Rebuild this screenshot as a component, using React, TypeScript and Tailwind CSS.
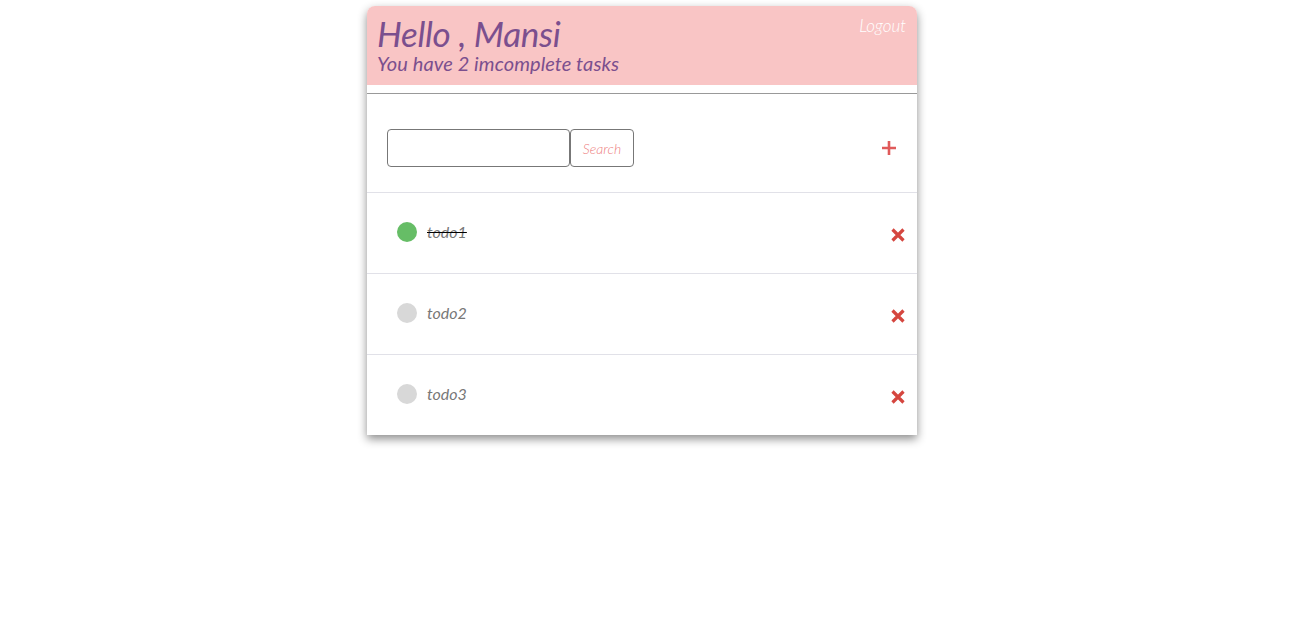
const todos = [
  { id: 1, title: "todo1", done: true },
  { id: 2, title: "todo2", done: false },
  { id: 3, title: "todo3", done: false },
];

const font = { fontFamily: "Lato, 'Open Sans', sans-serif" };

function Cross() {
  return (
    <svg width="16" height="16" viewBox="0 0 16 16" aria-hidden>
      <path d="M2.5 2.5 L13.5 13.5 M13.5 2.5 L2.5 13.5" stroke="#d5463f" strokeWidth="3.2" strokeLinecap="butt" />
    </svg>
  );
}

export default function App() {
  const left = todos.filter((t) => !t.done).length;
  return (
    <div className="min-h-screen bg-white pl-[367px] pt-[6px]" style={font}>
      <div className="h-fit w-[550px] rounded-t-lg bg-white shadow-[0_4px_10px_rgba(0,0,0,0.45)]">
        {/* header */}
        <div className="flex h-[79px] justify-between rounded-t-lg bg-[#f9c5c5] pl-[10px] pr-[11px]">
          <div className="flex flex-col italic text-[#7b4f8e]">
            <h1 className="mt-[9px] text-[35px] leading-[36px] tracking-[-0.3px]">Hello , Mansi</h1>
            <p className="mt-[2px] text-[20px] leading-[20px] tracking-[0.1px]">You have {left} imcomplete tasks</p>
          </div>
          <a className="mt-[10px] text-[17px] italic font-light leading-[20px] text-white">Logout</a>
        </div>
        <div className="h-[8px]" />
        <div className="border-t border-[#999]" />

        {/* search */}
        <div className="flex h-[99px] items-center justify-between border-b border-[#e1e1e8] pl-[20px] pr-[20px] pt-[10px]">
          <div className="flex">
            <input className="h-[38px] w-[183px] rounded-[4px] border border-[#777] outline-none" />
            <button className="h-[38px] w-[64px] rounded-[4px] border border-[#777] text-[14px] italic font-light text-[#ee8080]">
              Search
            </button>
          </div>
          <svg width="16" height="16" viewBox="0 0 16 16" aria-hidden>
            <path d="M8 1 V15 M1 8 H15" stroke="#e05a5a" strokeWidth="2.6" />
          </svg>
        </div>

        {/* list */}
        {todos.map((t, i) => (
          <div
            key={t.id}
            className={
              "flex items-center justify-between pl-[30px] pr-[11px] " +
              (i < todos.length - 1 ? "h-[81px] border-b border-[#e1e1e8]" : "h-[80px]")
            }
          >
            <div className="flex items-center gap-[10px] pb-[2px]">
              <span className={"h-[20px] w-[20px] rounded-full " + (t.done ? "bg-[#66bd66]" : "bg-[#d8d8d8]")} />
              <span
                className={
                  "text-[16px] italic text-[#777] " + (t.done ? "line-through decoration-black" : "")
                }
              >
                {t.title}
              </span>
            </div>
            <div className="mt-[4px]">
              <Cross />
            </div>
          </div>
        ))}
      </div>
    </div>
  );
}
